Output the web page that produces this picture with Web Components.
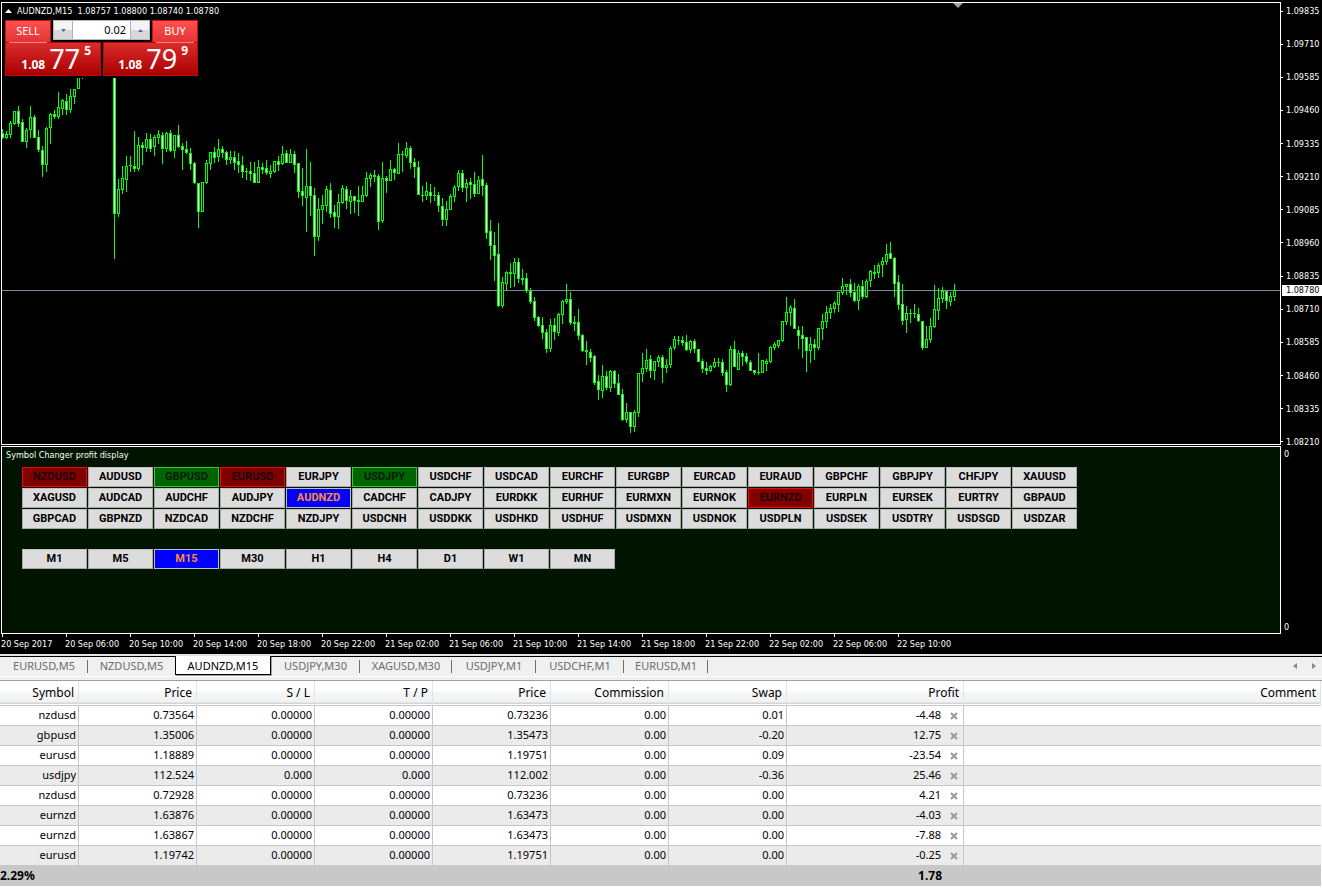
<!DOCTYPE html>
<html lang="en">
<head>
<meta charset="utf-8">
<title>AUDNZD,M15</title>
<style>
html, body { margin: 0; background: #fff; }
body { font-family: "Noto Sans", sans-serif; font-size: 11px; color: #000; }
</style>
</head>
<body>
<trading-terminal>
  <chart-window slot="chart">
    <price-plot slot="plot" price-y="287"></price-plot>
    <span slot="title">AUDNZD,M15&nbsp; 1.08757 1.08800 1.08740 1.08780</span>
    <one-click-panel slot="trade"></one-click-panel>
    <symbol-panel slot="indicator">Symbol Changer profit display</symbol-panel>
    <price-axis slot="prices"></price-axis>
    <time-axis slot="times"></time-axis>
  </chart-window>
  <chart-tabs slot="tabs"></chart-tabs>
  <trade-table slot="trades"></trade-table>
</trading-terminal>

<script>
function define(name, markup, setup) {
  const template = document.createElement('template');
  template.innerHTML = markup;
  customElements.define(name, class extends HTMLElement {
    constructor() {
      super();
      this.attachShadow({ mode: 'open' }).append(template.content.cloneNode(true));
    }
    connectedCallback() {
      if (setup && !this.ready) { this.ready = true; setup(this.shadowRoot, this); }
    }
  });
}

define('trading-terminal', `
<style>
:host { display: flex; flex-direction: column; overflow: hidden; }
</style>
<slot name="chart"></slot><slot name="tabs"></slot><slot name="trades"></slot>`);

define('chart-window', `
<style>
:host { display: block; background: #000; color: #fff; padding: 2px 0 0 1px;
  font-family: "DejaVu Sans Condensed", "Noto Sans", sans-serif; font-size: 9px; line-height: 12px; }
.grid { display: grid; grid-template-columns: minmax(0, 1fr) 41px; grid-template-rows: 443px 189px 20px; }
.main { position: relative; border: 1px solid #fff; box-sizing: border-box; overflow: hidden; }
.head { position: absolute; left: 0; top: 1px; }
.title { display: flex; align-items: center; gap: 5px; padding-left: 3px; height: 13px; }
.shift { position: absolute; left: 951px; top: 0; width: 10px; height: 5px; }
.sub { border: 1px solid #fff; box-sizing: border-box; margin-top: 1px; background: #001400; }
.axis { grid-row: 1 / 4; grid-column: 2; }
</style>
<div class="grid">
  <div class="main">
    <slot name="plot"></slot>
    <svg class="shift" viewBox="0 0 10 5"><path d="M0 0H10L5 5Z" fill="#a0a0a0"/></svg>
    <div class="head">
      <div class="title"><svg width="7" height="4" viewBox="0 0 7 4"><path d="M0 4L3.500 0L7 4Z" fill="#fff"/></svg><slot name="title"></slot></div>
      <slot name="trade"></slot>
    </div>
  </div>
  <div class="axis"><slot name="prices"></slot></div>
  <div class="sub"><slot name="indicator"></slot></div>
  <slot name="times"></slot>
</div>`);

/* Candles: high, body top, body bottom, low in thirds of a pixel below the
   group's base line, then u (rising), d (falling) or x (unchanged). */
const CANDLES = [
[0, 0, `388,400,413,418d 392,401,413,418u 364,370,404,413u 333,333,371,376u 318,332,371,382d 356,367,425,425d 384,391,425,443u
318,351,391,413u 345,351,415,415d 390,411,449,455d 437,449,494,530d 380,385,494,515u 339,343,385,431u 330,343,350,357d
276,322,350,356u 297,300,326,346u 282,303,329,345d 266,289,329,338u 267,267,290,312u 180,180,268,268u 180,200,215,238u`],
[28, 0, `180,180,643,776d 538,568,643,650u 499,535,569,581u 467,499,539,575u 467,496,496,515x 393,499,506,515d 411,436,506,512u
425,436,445,494d 399,417,445,455u 402,417,446,455d 405,411,442,467u 390,402,415,431u 396,405,446,491d 396,399,448,455u
390,399,453,456d 405,405,453,473u 375,405,440,444d 429,438,449,510d 423,448,458,461d 444,458,491,509d 487,490,550,551d
550,550,635,684d 547,547,635,635u 480,489,548,551u 455,455,491,509u 441,455,473,489d 417,448,470,486u`],
[55, 120, `78,87,98,113d 94,97,119,135d 93,111,120,132u 93,111,129,150d 99,123,135,159d 108,135,155,173d 144,153,155,179x
126,153,161,182d 126,160,188,188d 120,142,188,188u 129,141,150,162d 120,144,159,164d 136,153,162,173u 124,124,155,159u
108,123,135,153d 78,102,132,135u 90,99,128,128d 87,102,128,128u 93,102,134,158d 130,130,215,234d 144,213,228,257d
87,198,233,335u 126,198,228,288d 204,226,351,407d 234,267,351,362u 225,255,269,311u 198,207,257,276u 189,210,281,294d
255,276,290,323d 222,246,290,326u 195,204,248,251u 198,207,242,266d 210,228,245,281u 228,228,242,279d 198,240,245,288d
198,225,245,245u 156,174,227,231u 159,165,177,200u 150,165,170,186d 162,168,305,329d 126,174,302,308u 168,174,182,218d
120,147,182,182u 144,147,158,180d 69,102,161,161u 93,102,103,155x 66,84,108,113u 78,84,128,146d 114,126,140,173d
123,141,224,224d 198,225,227,245x 186,213,228,239u 192,216,228,248d 201,225,227,242x 216,225,258,275d 234,258,299,317d
243,267,299,317u 222,228,269,269u 195,201,230,245u 150,159,201,213u 150,159,203,215d 177,189,203,245u 174,186,195,236d
156,192,221,230d 168,180,221,221u`],
[120, 140, `45,117,137,167d 129,135,278,297d 240,273,317,359d 276,315,347,422d 249,342,497,500d 411,426,497,503u 393,396,431,453u
369,396,402,443d 354,366,402,440u 354,366,416,429d 387,414,419,434d 399,414,452,458d 444,452,485,491d 471,483,534,543d
528,531,557,560d 531,555,578,597d 567,576,627,639d 537,555,627,636u 534,555,575,600d 519,522,578,587u 480,483,525,551u
432,477,486,491u 456,477,548,554d 528,546,551,572d 507,546,587,600d 582,585,632,635d 603,630,635,675d 627,636,654,666d
645,648,728,734d 705,723,749,780d 675,708,752,773u 693,708,743,749d 690,693,743,755u 690,693,731,743d 702,729,764,764d
747,762,839,842d 789,816,839,849u 816,816,860,878d 810,816,860,875u 699,699,818,830u 639,684,702,726u 627,660,686,696u
645,657,692,713d 663,663,692,719u 645,651,665,681u 645,651,683,728d 657,675,683,698u 618,624,675,683u 588,597,623,629u
588,600,601,614x 588,600,609,618d 585,606,629,632d 600,603,629,638u 597,603,626,638d 627,627,665,665d 657,663,686,698d
666,684,692,704d 675,678,692,695u 654,666,681,683u 654,666,667,681x`],
[180, 220, `417,426,459,467d 450,456,495,516d 378,387,495,498u 363,387,440,440d 390,399,449,449u 393,399,411,437d 399,408,425,431d
420,426,452,452d 450,450,459,464d 399,456,457,464x 420,420,458,458u 417,423,431,453u 378,381,426,428u 366,372,384,389u
360,360,377,383u 303,303,363,365u 231,276,306,315u 255,261,279,318u 237,264,326,326d 318,330,348,387d 318,345,357,413d
351,351,392,456d 351,372,392,429u 357,372,384,419d 324,324,384,389u 282,303,327,359u 258,276,306,323u 252,264,279,297u
243,249,266,279u 216,216,255,276u 174,198,218,225u 192,192,201,224u 177,192,218,231d 189,216,243,246d 192,198,243,270u
180,198,231,237d 177,183,231,234u 150,153,183,201u 135,156,161,177d 129,135,159,173u 111,123,135,171u 72,102,125,135u
66,99,116,116d 111,114,192,231d 165,186,255,269d 192,252,302,315d 258,279,300,338u 267,279,280,309x 252,279,280,293x
264,282,303,305d 303,303,384,389d 318,357,384,384u 294,318,360,369u 195,267,321,324u 204,234,273,300u 201,213,237,249u
213,213,243,266d 216,228,245,258u 192,210,231,243u`]];
const FRAME_TOP = 3, STEP = 4;

define('price-plot', `
<style>
:host { display: block; height: 100%; }
svg { display: block; width: 100%; height: 100%; shape-rendering: crispEdges; }
.price { fill: #778899; } .wick, .body { fill: #0f0; } .u { fill: #000; } .d { fill: #fff; }
</style>
<svg role="img" aria-label="AUDNZD candlestick chart"></svg>`, (root, host) => {
  const rect = (c, x, y, w, h) => `<rect class="${c}" x="${x}" y="${y}" width="${w}" height="${h}"/>`;
  let out = rect('price', 0, host.getAttribute('price-y'), '100%', 1);
  for (const [first, base, rows] of CANDLES) {
    rows.trim().split(/\s+/).forEach((row, i) => {
      const kind = row.slice(-1), x = (first + i) * STEP;
      const [hi, top, bot, lo] = row.slice(0, -1).split(',').map(v => Math.round(v / 3) + base - FRAME_TOP);
      const h = Math.max(1, bot - top);
      out += rect('wick', x, hi, 1, lo - hi) + rect('body', x - 1, top, 3, h);
      if (kind !== 'x' && h > 2) out += rect(kind, x, top + 1, 1, h - 2);
    });
  }
  root.querySelector('svg').innerHTML = out;
});

define('one-click-panel', `
<style>
:host { display: block; background: #000; padding: 3px 4px 2px 3px; width: 193px; font-family: "Noto Sans", sans-serif; }
.panel { position: relative; display: grid; grid-template-columns: 96px 95px; gap: 2px; }
button { font: inherit; color: #fff; border: 0; padding: 0; background: none; }
.deal { display: flex; flex-direction: column; align-items: flex-start; }
.buy { align-items: flex-end; }
.name { width: 46px; height: 22px; box-sizing: border-box; border: 1px solid #c41212; border-bottom: 0;
  background: linear-gradient(#ff5050, #e23434); font-size: 11px; line-height: 20px; }
.quote { position: relative; width: 100%; height: 34px; box-sizing: border-box; border: 1px solid #b80808; background: linear-gradient(#dc2c2c, #a80000);
  display: flex; justify-content: flex-end; gap: 4px; padding-right: 9px; }
.quote::before { content: ""; height: 1px; width: 38px; background: #ff8080; position: absolute; left: 3px; top: -1px; }
.buy .quote::before { left: auto; right: 3px; }
b { font-size: 12px; line-height: 16px; }
.whole { align-self: flex-end; padding-bottom: 2px; }
.big { font-size: 27px; line-height: 32px; }
.volume { position: absolute; left: 48px; top: 0; width: 97px; height: 20px; box-sizing: border-box; border: 1px solid #b8b8c0;
  display: grid; grid-template-columns: 18px 1fr 18px; background: #b0b0b8; gap: 1px; }
.volume button { background: linear-gradient(#f4f4f4 50%, #d8d8d8 50%); display: grid; place-items: center; }
input { font: inherit; font-size: 11px; min-width: 0; border: 0; padding: 0 4px; text-align: right; color: #000; background: #fff; }
</style>
<div class="panel">
  <button class="deal sell"><span class="name">SELL</span><span class="quote"><b class="whole">1.08</b><span class="big">77</span><b>5</b></span></button>
  <button class="deal buy"><span class="name">BUY</span><span class="quote"><b class="whole">1.08</b><span class="big">79</span><b>9</b></span></button>
  <div class="volume">
    <button aria-label="Decrease volume"><svg width="5" height="3" viewBox="0 0 5 3"><path d="M0 0H5L2.500 3Z" fill="#5468b8"/></svg></button>
    <input aria-label="Volume" value="0.02">
    <button aria-label="Increase volume"><svg width="5" height="3" viewBox="0 0 5 3"><path d="M0 3H5L2.500 0Z" fill="#5468b8"/></svg></button>
  </div>
</div>`);

define('symbol-panel', `
<style>
:host { display: block; padding: 2px 4px; }
.title { line-height: 13px; }
.set { display: grid; grid-template-columns: repeat(16, 65px); grid-auto-rows: 20px; gap: 1px; padding: 5px 0 0 16px; }
.periods { padding-top: 20px; }
button { font: bold 11px/18px Roboto, Arial, sans-serif; padding: 0; color: #000; background: #dcdcdc;
  border: 1px solid #a9a9a9; border-top-color: #c0c0c0; }
.loss { background: #800000; border-color: #f00; color: #200000; }
.gain { background: #006400; border-color: #32cd32; color: #001c00; }
.on { background: #00f; border-color: #c0c0c0; color: #ff8c28; }
</style>
<div class="title"><slot></slot></div>
<div class="set symbols"></div>
<div class="set periods"></div>`, root => {
  const state = { NZDUSD: 'loss', EURUSD: 'loss', EURNZD: 'loss', GBPUSD: 'gain', USDJPY: 'gain', AUDNZD: 'on', M15: 'on' };
  const fill = (sel, names) => root.querySelector(sel).innerHTML =
    names.split(' ').map(n => `<button class="${state[n] || ''}">${n}</button>`).join('');
  fill('.symbols', 'NZDUSD AUDUSD GBPUSD EURUSD EURJPY USDJPY USDCHF USDCAD EURCHF EURGBP EURCAD EURAUD GBPCHF GBPJPY CHFJPY XAUUSD ' +
    'XAGUSD AUDCAD AUDCHF AUDJPY AUDNZD CADCHF CADJPY EURDKK EURHUF EURMXN EURNOK EURNZD EURPLN EURSEK EURTRY GBPAUD ' +
    'GBPCAD GBPNZD NZDCAD NZDCHF NZDJPY USDCNH USDDKK USDHKD USDHUF USDMXN USDNOK USDPLN USDSEK USDTRY USDSGD USDZAR');
  fill('.periods', 'M1 M5 M15 M30 H1 H4 D1 W1 MN');
});

define('price-axis', `
<style>
:host { display: flex; flex-direction: column; position: relative; padding-top: 3px; height: 628px; }
.prices { display: flex; flex-direction: column; justify-content: space-between; height: 443px; }
.prices span { display: flex; align-items: center; gap: 3px; }
.prices span::before { content: ""; width: 2px; height: 1px; background: #fff; }
.range { flex: 1; display: flex; flex-direction: column; justify-content: space-between; padding-left: 3px; }
.now { position: absolute; left: 1px; right: 0; top: 283px; height: 11px; line-height: 11px; padding-left: 4px; background: #fff; color: #000; }
</style>
<div class="prices"></div>
<div class="range"><span>0</span><span>0</span></div>
<div class="now">1.08780</div>`, root => {
  let out = '';
  for (let p = 109835; p >= 108210; p -= 125) out += `<span>${(p / 100000).toFixed(5)}</span>`;
  root.querySelector('.prices').innerHTML = out;
});

define('time-axis', `
<style>
:host { display: flex; overflow: hidden; }
span { flex: none; width: 64px; white-space: nowrap; }
span::before { content: ""; display: block; width: 1px; height: 3px; margin: 0 0 1px 1px; background: #fff; }
</style>`, root => {
  ['20 Sep 2017', '20 Sep 06:00', '20 Sep 10:00', '20 Sep 14:00', '20 Sep 18:00', '20 Sep 22:00', '21 Sep 02:00', '21 Sep 06:00',
   '21 Sep 10:00', '21 Sep 14:00', '21 Sep 18:00', '21 Sep 22:00', '22 Sep 02:00', '22 Sep 06:00', '22 Sep 10:00'].forEach(t => {
    const s = document.createElement('span'); s.textContent = t; root.append(s);
  });
});

define('chart-tabs', `
<style>
:host { display: block; border-top: 2px solid #e3e3e3; background: #f0f0f0; }
nav { display: flex; justify-content: space-between; height: 21px; border-top: 1px solid #000; border-bottom: 1px solid #fff; box-sizing: border-box; margin-bottom: 3px; }
.tabs { display: grid; grid-template-columns: 88px 87px 96px 89px 92px 84px 88px 84px; }
a { color: #6d6d6d; text-decoration: none; text-align: center; line-height: 17px; height: 17px; position: relative; }
a::after { content: ""; position: absolute; right: 0; top: 3px; width: 1px; height: 13px; background: #6d6d6d; }
a.before::after, a.active::after { content: none; }
.active { color: #000; background: #fff; border: 1px solid #000; border-top: 0; margin-top: -1px; padding-top: 1px; box-shadow: 1px 1px #a0a0a0; }
.scroll { display: flex; gap: 13px; padding: 0 5px; height: 17px; align-items: center; }
.scroll button { border: 0; padding: 0; background: none; width: 6px; display: grid; place-items: center; }
</style>
<nav aria-label="Charts">
  <div class="tabs"><a href="#">EURUSD,M5</a><a href="#" class="before">NZDUSD,M5</a><a href="#" class="active">AUDNZD,M15</a><a href="#">USDJPY,M30</a><a href="#">XAGUSD,M30</a><a href="#">USDJPY,M1</a><a href="#">USDCHF,M1</a><a href="#">EURUSD,M1</a></div>
  <div class="scroll">
    <button aria-label="Scroll left"><svg width="4" height="6" viewBox="0 0 4 6"><path d="M4 0V6L0 3Z" fill="#888"/></svg></button>
    <button aria-label="Scroll right"><svg width="4" height="6" viewBox="0 0 4 6"><path d="M0 0V6L4 3Z" fill="#888"/></svg></button>
  </div>
</nav>`);

define('trade-table', `
<style>
:host { display: block; border-top: 1px solid #a0a0a0; }
table { width: calc(100% - 1px); table-layout: fixed; border-collapse: separate; border-spacing: 0; text-align: right; }
th, td { padding: 0 2px 0 0; box-sizing: border-box; overflow: hidden; white-space: nowrap; }
th { font-weight: 400; font-size: 12px; line-height: 22px; height: 25px; padding: 0 4px 0 0; border-right: 1px solid #e2e3e6; border-bottom: 1px solid #c6c6c6;
  background: linear-gradient(#fff 10px, #f5f6f8 11px, #f1f2f4 21px, #d5d5d5 22px, #d5d5d5 23px, #fff 23px); }
td { height: 20px; line-height: 17px; padding-bottom: 2px; border-right: 1px solid #c6c6c6; border-bottom: 1px solid #c6c6c6; }
td:last-child { border-right: 0; }
tbody tr:nth-child(even) { background: #ebebeb; }
tbody tr:last-child td { border-bottom-color: #c8c8c8; }
tfoot { background: #c8c8c8; font-weight: 700; font-size: 12px; }
tfoot td { border: 0; }
tfoot td:first-child { text-align: left; }
.profit { padding-right: 22px; }
tbody .profit { padding-right: 5px; }
button { border: 0; background: none; padding: 0; margin-left: 9px; width: 8px; height: 8px; line-height: 0; vertical-align: -1px; }
svg { display: block; }
</style>
<table>
  <colgroup><col style="width:79px"><col style="width:118px"><col style="width:118px"><col style="width:118px"><col style="width:118px"><col style="width:118px"><col style="width:118px"><col style="width:177px"><col></colgroup>
  <thead><tr><th>Symbol</th><th>Price</th><th>S / L</th><th>T / P</th><th>Price</th><th>Commission</th><th>Swap</th><th>Profit</th><th>Comment</th></tr></thead>
  <tbody></tbody>
  <tfoot><tr><td>2.29%</td><td colspan="6"></td><td class="profit">1.78</td><td></td></tr></tfoot>
</table>`, root => {
  const rows = [
    ['nzdusd', '0.73564', '0.00000', '0.00000', '0.73236', '0.00', '0.01', '-4.48'],
    ['gbpusd', '1.35006', '0.00000', '0.00000', '1.35473', '0.00', '-0.20', '12.75'],
    ['eurusd', '1.18889', '0.00000', '0.00000', '1.19751', '0.00', '0.09', '-23.54'],
    ['usdjpy', '112.524', '0.000', '0.000', '112.002', '0.00', '-0.36', '25.46'],
    ['nzdusd', '0.72928', '0.00000', '0.00000', '0.73236', '0.00', '0.00', '4.21'],
    ['eurnzd', '1.63876', '0.00000', '0.00000', '1.63473', '0.00', '0.00', '-4.03'],
    ['eurnzd', '1.63867', '0.00000', '0.00000', '1.63473', '0.00', '0.00', '-7.88'],
    ['eurusd', '1.19742', '0.00000', '0.00000', '1.19751', '0.00', '0.00', '-0.25']];
  const close = '<button aria-label="Close order"><svg width="8" height="8" viewBox="0 0 8 8"><path d="M1 1L7 7M7 1L1 7" stroke="#999" stroke-width="2"/></svg></button>';
  root.querySelector('tbody').innerHTML = rows.map(r => '<tr>' + r.slice(0, 7).map(c => `<td>${c}</td>`).join('') +
    `<td class="profit">${r[7]}${close}</td><td></td></tr>`).join('');
});
</script>
</body>
</html>
